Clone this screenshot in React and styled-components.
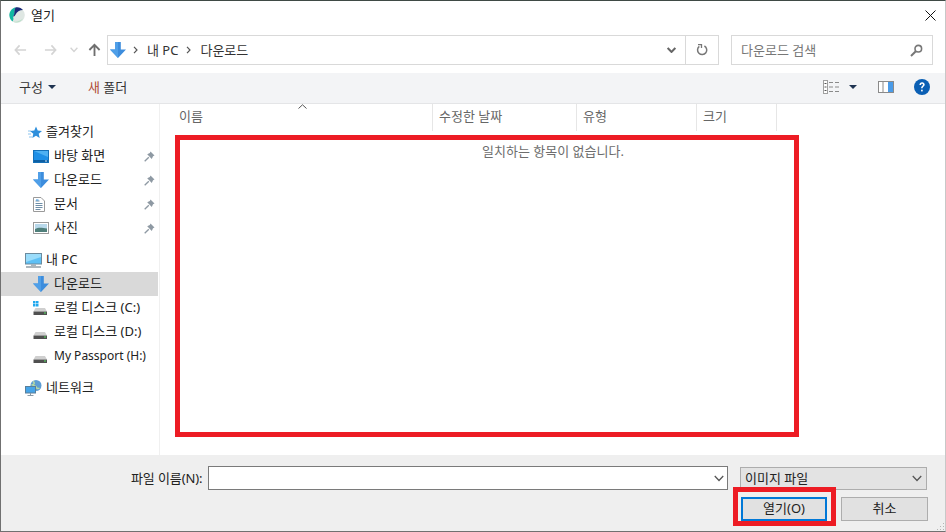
import React from "react";
import styled, { createGlobalStyle } from "styled-components";

const Global = createGlobalStyle`
  html, body { margin: 0; padding: 0; background: #fff; }
  #root { width: 946px; height: 532px; }
  * { box-sizing: border-box; }
`;

const Dialog = styled.div`
  position: relative;
  width: 946px;
  height: 532px;
  display: flex;
  flex-direction: column;
  background: #fff;
  border: 1px solid #707070;
  border-top-color: #3f4a45;
  border-right-color: #c8c8c8;
  font-family: "Noto Sans", "Noto Sans CJK KR", sans-serif;
  font-size: 13px;
  color: #1a1a1a;
  overflow: hidden;
`;
const TitleBar = styled.div`
  height: 31px;
  flex: none;
  display: flex;
  align-items: center;
  padding: 0 9px 3px 8px;
  gap: 6px;
  span { flex: 1; color: #222; padding-bottom: 2px; }
`;
const NavRow = styled.div`
  height: 41px;
  flex: none;
  display: flex;
  align-items: center;
  padding: 0 0 5px 5px;
`;
const NavButton = styled.div`
  width: ${p => p.$w}px;
  display: flex;
  align-items: center;
  justify-content: center;
  flex: none;
`;
const AddressBar = styled.div`
  width: 612px;
  height: 30px;
  flex: none;
  border: 1px solid #d9d9d9;
  display: flex;
  align-items: center;
  padding-left: 2px;
  color: #333;
`;
const SepSlot = styled.span`
  display: flex;
  align-items: center;
  margin-left: ${p => p.$ml || 0}px;
`;
const Crumb = styled.span`
  margin: 0 8px 0 9px;
  padding-bottom: 2px;
  white-space: nowrap;
`;
const AddrSpacer = styled.div`flex: 1;`;
const AddrBtn = styled.div`
  width: ${p => p.$w}px;
  height: 100%;
  display: flex;
  align-items: center;
  justify-content: center;
  border-left: ${p => p.$line ? "1px solid #d9d9d9" : "none"};
`;
const SearchBox = styled.div`
  width: 202px;
  height: 30px;
  margin-left: 12px;
  flex: none;
  border: 1px solid #d9d9d9;
  display: flex;
  align-items: center;
  justify-content: space-between;
  padding: 0 9px 0 9px;
  color: #777;
  span { padding-bottom: 2px; }
`;
const Toolbar = styled.div`
  height: 31px;
  flex: none;
  background: #f3f4f6;
  border-bottom: 1px solid #e4e5e7;
  display: flex;
  align-items: center;
  padding: 0 0 2px 18px;
  color: #333;
`;
const ToolText = styled.span`
  display: flex;
  align-items: center;
  gap: 5px;
  margin-right: ${p => p.$mr || 0}px;
  white-space: nowrap;
  span { padding-bottom: 2px; }
  b { font-weight: 400; color: ${p => p.$accent || "inherit"}; }
`;
const ToolRight = styled.div`
  margin-left: auto;
  display: flex;
  align-items: center;
  padding-right: 15px;
`;
const ToolGap = styled.span`
  width: ${p => p.$w}px;
  flex: none;
`;
const Main = styled.div`
  flex: 1;
  display: flex;
  min-height: 0;
`;
const Sidebar = styled.div`
  width: 159px;
  flex: none;
  border-right: 1px solid #f0f0f0;
  padding: 16px 1px 0 0;
  display: flex;
  flex-direction: column;
`;
const Row = styled.div`
  height: 24px;
  flex: none;
  display: flex;
  align-items: center;
  padding-left: ${p => p.$top ? 24 : 32}px;
  padding-right: 3px;
  margin-top: ${p => p.$gap || 0}px;
  background: ${p => p.$active ? "#d9d9d9" : "transparent"};
  color: #222;
  white-space: nowrap;
`;
const IconSlot = styled.span`
  width: 21px;
  flex: none;
  display: flex;
  align-items: center;
  justify-content: flex-start;
  padding-left: ${p => p.$pl || 0}px;
`;
const RowLabel = styled.span`
  flex: 1;
  font-size: ${p => p.$latin ? 12 : 13}px;
  padding-bottom: ${p => p.$latin ? 2 : 4}px;
`;
const Content = styled.div`
  flex: 1;
  display: flex;
  flex-direction: column;
  position: relative;
`;
const HeaderRow = styled.div`
  height: 27px;
  flex: none;
  display: flex;
  color: #666;
`;
const HeaderCell = styled.div`
  width: ${p => p.$w}px;
  flex: none;
  border-right: 1px solid #e6e6e6;
  display: flex;
  align-items: center;
  padding: 0 0 5px ${p => p.$pl || 6}px;
`;
const SortCaret = styled.svg`
  position: absolute;
  left: 138px;
  top: 0;
`;
const Empty = styled.div`
  text-align: center;
  color: #6d6d6d;
  padding-top: 12px;
  line-height: 16px;
  width: 786px;
`;
const Footer = styled.div`
  height: 76px;
  flex: none;
  background: #efefef;
  padding: 11px 0 0 0;
  position: relative;
  display: flex;
  flex-direction: column;
`;
const FileRow = styled.div`
  display: flex;
  align-items: center;
  height: 24px;
  padding-left: 130px;
`;
const FileLabel = styled.span`
  width: 77px;
  flex: none;
  color: #222;
  white-space: nowrap;
  letter-spacing: -0.1px;
  padding-bottom: 2px;
`;
const FileInput = styled.div`
  width: 520px;
  height: 24px;
  flex: none;
  background: #fff;
  border: 1px solid #7a7a7a;
  display: flex;
  align-items: center;
  justify-content: flex-end;
  padding-right: 3px;
`;
const TypeSelect = styled.div`
  width: 187px;
  height: 23px;
  margin-left: 12px;
  flex: none;
  background: #e3e3e3;
  border: 1px solid #adadad;
  display: flex;
  align-items: center;
  justify-content: space-between;
  padding: 0 4px;
  color: #222;
  span { padding-bottom: 2px; }
`;
const ButtonRow = styled.div`
  display: flex;
  justify-content: flex-end;
  gap: 14px;
  padding-right: 17px;
  margin-top: 7px;
`;
const Btn = styled.div`
  width: ${p => p.$w}px;
  height: 24px;
  background: #e1e1e1;
  border: ${p => p.$primary ? "2px solid #0078d7" : "1px solid #adadad"};
  display: flex;
  align-items: center;
  justify-content: center;
  color: #222;
  padding-bottom: 4px;
`;
const Callout = styled.div`
  position: absolute;
  left: ${p => p.$x}px;
  top: ${p => p.$y}px;
  width: ${p => p.$w}px;
  height: ${p => p.$h}px;
  border: 5px solid #ed1c24;
  pointer-events: none;
`;
const Grip = styled.svg`
  position: absolute;
  right: 0;
  bottom: 0;
`;

const Logo = () => (
  <svg width="16" height="16" viewBox="0 0 16 16">
    <circle cx="8" cy="8" r="7.8" fill="#dfe7e3" />
    <path d="M14 11.500c-1.500 2.500-4 4-6.500 4-1.500 0-2.700-.4-3.500-1 4 .5 7.500-.5 10-3z" fill="#b9e0c8" />
    <path d="M.4 8.500C.2 4.500 3 1 6.500.4 4.500 3.500 7 7 4 9.500 5 12 4 14 3.500 14.500 1.700 13 .6 11 .4 8.500z" fill="#10b8a2" />
    <path d="M6.500.4C9.500-.2 12.500 1 14 3 10.500 3.200 8 4.500 6.300 8c-.6 1.200-1.300 1.500-2.300 1.500C6.500 7 4.500 3.500 6.500.4z" fill="#1b2a78" />
  </svg>
);
const ArrowLeft = ({ c = "#d4d4d4", flip }) => (
  <svg width="13" height="12" viewBox="0 0 14 12" style={flip ? { transform: "scaleX(-1)" } : undefined}>
    <path d="M6 1 1.500 6 6 11M1.500 6H13" fill="none" stroke={c} strokeWidth="1.800" />
  </svg>
);
const ChevDown = ({ c = "#d4d4d4", w = 8, sw = 1.4 }) => (
  <svg width={w} height={w * 0.7} viewBox="0 0 8 5.600">
    <path d="M.6.800 4 4.400 7.400.800" fill="none" stroke={c} strokeWidth={sw} />
  </svg>
);
const ArrowUp = () => (
  <svg width="13" height="14" viewBox="0 0 14 14">
    <path d="M1.500 7 7 1.500 12.500 7M7 1.500V13.500" fill="none" stroke="#6f6f6f" strokeWidth="2" />
  </svg>
);
const DownloadIcon = ({ s = 16 }) => (
  <svg width={s} height={s} viewBox="0 0 16 16">
    <path d="M5.200 0h5.600v7.500H16L8 16 0 7.500h5.200z" fill="#3d8ddd" />
    <path d="M5.200 0h2.800v16L0 7.500h5.200z" fill="#4f9fe8" />
  </svg>
);
const Sep = () => (
  <svg width="5" height="8" viewBox="0 0 5 8">
    <path d="M1 .8 4 4 1 7.200" fill="none" stroke="#555" strokeWidth="1.200" />
  </svg>
);
const Refresh = () => (
  <svg width="12" height="12" viewBox="0 0 12 12">
    <path d="M3.300 2.400A4.600 4.600 0 1 0 8.400 2" fill="none" stroke="#777" strokeWidth="1.500" />
    <path d="M2 .5h3.500V4" fill="none" stroke="#777" strokeWidth="1.300" />
  </svg>
);
const SearchIcon = () => (
  <svg width="13" height="13" viewBox="0 0 13 13">
    <circle cx="8.300" cy="4.700" r="3.300" fill="none" stroke="#777" strokeWidth="1.600" />
    <path d="M5.800 7.300 1 12" stroke="#777" strokeWidth="2" />
  </svg>
);
const Caret = () => (
  <svg width="8" height="4" viewBox="0 0 8 4"><path d="M0 0h8L4 4z" fill="#1f3351" /></svg>
);
const ViewIcon = () => (
  <svg width="16" height="14" viewBox="0 0 16 14">
    <rect x=".5" y=".5" width="4" height="13" fill="#fff" stroke="#a0a0a0" />
    <path d="M1.500 3.500h2M1.500 7h2M1.500 10.500h2" stroke="#555" />
    <path d="M6 2.500h4M12 2.500h4M6 7h4M12 7h4M6 11.500h4M12 11.500h4" stroke="#8a8a8a" />
  </svg>
);
const PaneIcon = () => (
  <svg width="16" height="12" viewBox="0 0 16 12">
    <rect x=".5" y=".5" width="15" height="11" fill="#fff" stroke="#8a8a8a" />
    <rect x="10" y="1" width="5" height="10" fill="#4a9be8" />
    <path d="M5 1v10" stroke="#8a8a8a" />
  </svg>
);
const HelpIcon = () => (
  <svg width="16" height="16" viewBox="0 0 16 16">
    <circle cx="8" cy="8" r="8" fill="#0a5fb4" />
    <path d="M5.400 6c0-1.700 1.100-2.800 2.700-2.800 1.500 0 2.600 1 2.600 2.300 0 1.100-.6 1.600-1.300 2.200-.6.500-.8.800-.8 1.500H7.100c0-1.100.3-1.700 1-2.300.6-.5.900-.8.900-1.300 0-.5-.4-.9-.9-.9-.6 0-1 .5-1 1.300z" fill="#fff" />
    <rect x="7.100" y="10.700" width="1.600" height="1.700" fill="#fff" />
  </svg>
);
const Star = () => (
  <svg width="14" height="13" viewBox="0 0 14 13">
    <path d="M8 .5 9.700 4.500 14 4.900 10.700 7.700 11.700 12 8 9.700 4.300 12 5.300 7.700 2 4.900 6.300 4.500z" fill="#2e8fdc" />
    <path d="M0 5h3M0 8h3M1 11h3" stroke="#8cc4ee" />
  </svg>
);
const Desktop = () => (
  <svg width="16" height="13" viewBox="0 0 16 13">
    <rect x=".5" y=".5" width="15" height="12" fill="#1e8fe6" stroke="#1470b8" />
    <rect x="1" y="10" width="14" height="2" fill="#0d5fa3" />
    <path d="M1 1h14v6z" fill="#4db0f2" />
    <rect x="12" y="10.500" width="2" height="1" fill="#cfe6f7" />
  </svg>
);
const Doc = () => (
  <svg width="12" height="15" viewBox="0 0 12 15">
    <path d="M.5.500H8L11.500 4v10.500H.5z" fill="#fff" stroke="#9a9a9a" />
    <path d="M2.500 4h4M2.500 6.500h7M2.500 8.500h7M2.500 10.500h7M2.500 12.500h5" stroke="#6f8fa8" />
    <path d="M3 3h2.500" stroke="#2e8fdc" />
  </svg>
);
const Pic = () => (
  <svg width="16" height="12" viewBox="0 0 16 12">
    <rect x=".5" y=".5" width="15" height="11" fill="#fff" stroke="#9a9a9a" />
    <rect x="2" y="2" width="12" height="8" fill="#b8d8ea" />
    <path d="M2 7c3-1.500 6-1.500 12-.5V10H2z" fill="#4f7f7a" />
  </svg>
);
const Pin = () => (
  <svg width="11" height="11" viewBox="0 0 11 11">
    <path d="M6.500.500 10.500 4.500 9 5.200 7.800 7.900 3.200 3.300 5.800 2z" fill="#8e99a3" />
    <path d="M4.800 6.200.7 10.300" stroke="#8e99a3" strokeWidth="1.300" />
  </svg>
);
const Computer = () => (
  <svg width="17" height="15" viewBox="0 0 17 15">
    <rect x=".5" y=".5" width="16" height="10.500" fill="#5ec0f5" stroke="#6b8b9e" />
    <path d="M1 1h15v3L1 9z" fill="#9adcfa" />
    <path d="M6 11h5v2H6z" fill="#a8b4bc" />
    <path d="M1 14h15" stroke="#98a4ac" strokeWidth="1.600" />
  </svg>
);
const Drive = ({ win }) => (
  <svg width="15" height="15" viewBox="0 0 15 15">
    {win && (
      <g fill="#20a8ee">
        <rect x="0" y="0" width="2.500" height="2.500" />
        <rect x="3" y="0" width="2.500" height="2.500" />
        <rect x="0" y="3" width="2.500" height="2.500" />
        <rect x="3" y="3" width="2.500" height="2.500" />
      </g>
    )}
    <path d="M2.500 7h9.500l2 3.500H.5z" fill="#cfcfcf" />
    <path d="M.5 10.500H14v3.500H.5z" fill="#505050" />
    <rect x="11" y="11.500" width="2" height="1" fill="#55e060" />
  </svg>
);
const Network = () => (
  <svg width="17" height="16" viewBox="0 0 17 16">
    <circle cx="11" cy="5.500" r="5.500" fill="#5d9dd3" />
    <path d="M8 1.500c2 1 1.500 3-.5 3.500 1.500 1 3.500.5 4 2.500.2 1 1.500 1.500 3 .5" fill="none" stroke="#b7d9a3" strokeWidth="1.500" />
    <rect x=".5" y="6.500" width="10" height="6.500" fill="#46a4e8" stroke="#5a7f99" />
    <path d="M5.500 13v2M2.500 15.500h6" stroke="#8a9aa6" />
  </svg>
);
const Close = () => (
  <svg width="11" height="11" viewBox="0 0 11 11">
    <path d="M.5.500l10 10M10.500.500l-10 10" stroke="#111" strokeWidth="1" />
  </svg>
);

const favorites = [
  { label: "바탕 화면", icon: <Desktop /> },
  { label: "다운로드", icon: <DownloadIcon /> },
  { label: "문서", icon: <Doc /> },
  { label: "사진", icon: <Pic /> },
];
const devices = [
  { label: "다운로드", icon: <DownloadIcon />, active: true },
  { label: "로컬 디스크 (C:)", icon: <Drive win /> },
  { label: "로컬 디스크 (D:)", icon: <Drive /> },
  { label: "My Passport (H:)", icon: <Drive />, latin: true },
];
const columns = [
  { label: "이름", w: 273, pl: 19 },
  { label: "수정한 날짜", w: 144 },
  { label: "유형", w: 120 },
  { label: "크기", w: 80 },
];

export default function App() {
  return (
    <Dialog>
      <Global />
      <TitleBar>
        <Logo />
        <span>열기</span>
        <Close />
      </TitleBar>
      <NavRow>
        <NavButton $w={28}><ArrowLeft /></NavButton>
        <NavButton $w={32}><ArrowLeft flip /></NavButton>
        <NavButton $w={15}><ChevDown /></NavButton>
        <NavButton $w={26}><ArrowUp /></NavButton>
        <AddressBar>
          <DownloadIcon />
          <SepSlot $ml={7}><Sep /></SepSlot>
          <Crumb>내 PC</Crumb>
          <SepSlot><Sep /></SepSlot>
          <Crumb>다운로드</Crumb>
          <AddrSpacer />
          <AddrBtn $w={28}><ChevDown c="#666" w={9} sw={1.8} /></AddrBtn>
          <AddrBtn $w={33} $line><Refresh /></AddrBtn>
        </AddressBar>
        <SearchBox>
          <span>다운로드 검색</span>
          <SearchIcon />
        </SearchBox>
      </NavRow>
      <Toolbar>
        <ToolText $mr={32}><span>구성</span> <Caret /></ToolText>
        <ToolText $accent="#b04a35"><span><b>새</b> 폴더</span></ToolText>
        <ToolRight>
          <ViewIcon />
          <ToolGap $w={10} />
          <Caret />
          <ToolGap $w={21} />
          <PaneIcon />
          <ToolGap $w={20} />
          <HelpIcon />
        </ToolRight>
      </Toolbar>
      <Main>
        <Sidebar>
          <Row $top>
            <IconSlot $pl={3}><Star /></IconSlot>
            <RowLabel>즐겨찾기</RowLabel>
          </Row>
          {favorites.map(f => (
            <Row key={f.label}>
              <IconSlot>{f.icon}</IconSlot>
              <RowLabel>{f.label}</RowLabel>
              <Pin />
            </Row>
          ))}
          <Row $top $gap={8}>
            <IconSlot><Computer /></IconSlot>
            <RowLabel>내 PC</RowLabel>
          </Row>
          {devices.map(d => (
            <Row key={d.label} $active={d.active}>
              <IconSlot>{d.icon}</IconSlot>
              <RowLabel $latin={d.latin}>{d.label}</RowLabel>
            </Row>
          ))}
          <Row $top $gap={8}>
            <IconSlot><Network /></IconSlot>
            <RowLabel>네트워크</RowLabel>
          </Row>
        </Sidebar>
        <Content>
          <SortCaret width="9" height="5" viewBox="0 0 9 5">
            <path d="M.5 4.500 4.500.800 8.500 4.500" fill="none" stroke="#555" />
          </SortCaret>
          <HeaderRow>
            {columns.map(c => (
              <HeaderCell key={c.label} $w={c.w} $pl={c.pl}>{c.label}</HeaderCell>
            ))}
          </HeaderRow>
          <Empty>일치하는 항목이 없습니다.</Empty>
        </Content>
      </Main>
      <Footer>
        <FileRow>
          <FileLabel>파일 이름(N):</FileLabel>
          <FileInput><ChevDown c="#555" w={10} sw={1} /></FileInput>
          <TypeSelect>
            <span>이미지 파일</span>
            <ChevDown c="#555" w={10} sw={1} />
          </TypeSelect>
        </FileRow>
        <ButtonRow>
          <Btn $w={86} $primary>열기(O)</Btn>
          <Btn $w={87}>취소</Btn>
        </ButtonRow>
        <Grip width="10" height="10" viewBox="0 0 10 10">
          <path d="M8 2h1v1H8zM5 5h1v1H5zM8 5h1v1H8zM2 8h1v1H2zM5 8h1v1H5zM8 8h1v1H8z" fill="#b5b5b5" />
        </Grip>
      </Footer>
      <Callout $x={174} $y={134} $w={624} $h={302} />
      <Callout $x={732} $y={486} $w={103} $h={39} />
    </Dialog>
  );
}
